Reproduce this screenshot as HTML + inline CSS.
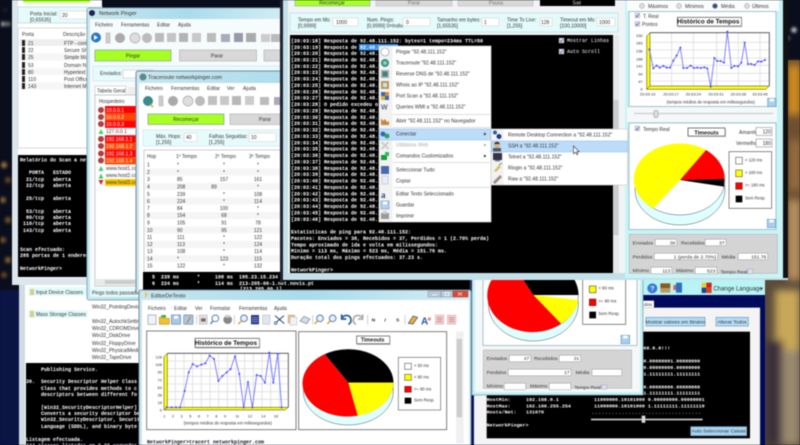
<!DOCTYPE html>
<html><head><meta charset="utf-8"><style>
html,body{margin:0;padding:0;width:800px;height:445px;overflow:hidden;background:#0a0d1c}
svg{display:block;filter:blur(.42px)}
.t{font-family:"Liberation Sans",sans-serif;font-size:5px;fill:#333}
.b{font-family:"Liberation Sans",sans-serif;font-size:6.3px;font-weight:bold;fill:#111}
.m{font-family:"Liberation Mono",monospace;font-size:5px;fill:#fff;font-weight:bold;white-space:pre}
.k{font-family:"Liberation Mono",monospace;font-size:5px;fill:#111;font-weight:bold;white-space:pre}
.e{text-anchor:end}.c{text-anchor:middle}
.z text{font-size:15px}
.z .b{font-size:19px}
</style></head><body>
<svg width="800" height="445" viewBox="0 0 800 445" xmlns="http://www.w3.org/2000/svg">
<defs>
<filter id="bl" x="-50%" y="-50%" width="200%" height="200%"><feGaussianBlur stdDeviation="1.6"/></filter>
<filter id="bl2" x="-50%" y="-50%" width="200%" height="200%"><feGaussianBlur stdDeviation="4"/></filter>
<marker id="p" markerUnits="userSpaceOnUse" markerWidth="8" markerHeight="8" refX="4" refY="4"><circle cx="4" cy="4" r="3" fill="#4a4aff"/></marker>
<linearGradient id="glass" x1="0" y1="0" x2="1" y2="0"><stop offset="0" stop-color="#c9e6ee"/><stop offset=".5" stop-color="#a9dcec"/><stop offset="1" stop-color="#d4eef4"/></linearGradient>
</defs>
<!-- background -->
<rect width="800" height="445" fill="#0a0d1c"/>
<rect x="0" y="290" width="25" height="155" fill="#0b1545"/>
<g filter="url(#bl)">
<circle cx="3" cy="24" r="2" fill="#ddd"/><circle cx="8" cy="24" r="2" fill="#999"/><circle cx="5" cy="10" r="1.5" fill="#334"/>
<circle cx="4" cy="165" r="3" fill="#a47a3a"/><circle cx="8" cy="180" r="3" fill="#6a4a24"/><circle cx="3" cy="200" r="3" fill="#8a6a3a"/><circle cx="8" cy="220" r="3" fill="#7a5a2a"/><circle cx="3" cy="240" r="3" fill="#7a5a2a"/><circle cx="8" cy="260" r="3" fill="#8a6a2a"/><circle cx="4" cy="275" r="3" fill="#6a4a24"/>
<circle cx="794" cy="30" r="2.5" fill="#eee"/><circle cx="788" cy="38" r="1.5" fill="#aab"/>
</g>
<rect x="765" y="280" width="35" height="165" fill="#5a4a3a"/>
<rect x="785" y="60" width="15" height="220" fill="#6e5030"/>
<g filter="url(#bl2)">
<rect x="788" y="65" width="12" height="50" fill="#d8901e"/><rect x="790" y="140" width="10" height="50" fill="#9a7040"/><rect x="788" y="200" width="12" height="80" fill="#b89464"/>
<rect x="775" y="290" width="25" height="60" fill="#c8a858"/><rect x="765" y="340" width="18" height="105" fill="#3a2e3a"/><rect x="782" y="350" width="18" height="95" fill="#9a8a70"/>
</g>

<!-- back-left window -->
<rect x="19" y="280" width="125" height="165" fill="#cfdce4"/>
<rect x="25" y="280" width="115" height="165" fill="#fff"/>
<rect x="28" y="287" width="60" height="9" fill="#e2fbfb"/>
<rect x="28" y="310" width="60" height="8" fill="#e2fbfb"/>
<rect x="30" y="289" width="4" height="6" fill="#d8cc8a"/><rect x="30" y="311" width="4" height="6" fill="#d8cc8a"/>
<text class="t" x="36" y="294">Input Device Classes</text>
<text class="t" x="36" y="316">Mass Storage Classes</text>
<text class="t" x="92" y="308.5">Win32_PointingDevice</text>
<text class="t" x="92" y="323">Win32_AutochkSetting</text>
<text class="t" x="92" y="330">Win32_CDROMDrive</text>
<text class="t" x="92" y="337">Win32_DiskDrive</text>
<text class="t" x="92" y="345">Win32_FloppyDrive</text>
<text class="t" x="92" y="352">Win32_PhysicalMedia</text>
<text class="t" x="92" y="359">Win32_TapeDrive</text>
<rect x="26" y="363" width="114" height="82" fill="#000"/>
<text class="m" x="41" y="371">Publishing Service.</text>
<text class="m" x="26" y="383">36.  Security Descriptor Helper Class</text>
<text class="m" x="41" y="390">Class that provides methods to c</text>
<text class="m" x="41" y="396">descriptors between different fo</text>
<text class="m" x="41" y="409">[Win32_SecurityDescriptorHelper]</text>
<text class="m" x="41" y="415">Converts a security descriptor be</text>
<text class="m" x="41" y="421">Win32_SecurityDescriptor, Securit</text>
<text class="m" x="41" y="428">Language (SDDL), and binary byte</text>
<text class="m" x="26" y="441">Listagem efectuada.</text>
<text class="m" x="26" y="447">444 classes listadas em 0.06 segundos</text>

<!-- bottom right window -->
<rect x="470" y="278" width="295" height="167" fill="#000a5c"/>
<rect x="643" y="280" width="122" height="15" fill="#b8f4f4"/>
<g class="z" transform="translate(470,270) scale(.33333)">
<circle cx="547" cy="55" r="15" fill="#3a78d8"/><text x="541" y="62" style="font-size:20px;font-weight:bold;font-family:'Liberation Sans'" fill="#fff">?</text>
<rect x="571" y="40" width="30" height="14" fill="#8a5a20"/><rect x="571" y="54" width="30" height="14" fill="#b89a60"/>
<rect x="610" y="45" width="10" height="15" fill="#d86060"/><rect x="618" y="38" width="18" height="30" fill="#2a70c0"/>
<rect x="695" y="38" width="14" height="15" fill="#e8d020"/><rect x="709" y="38" width="16" height="15" fill="#d02020"/><rect x="695" y="53" width="14" height="16" fill="#2040a0"/><rect x="709" y="53" width="16" height="16" fill="#e04020"/>
<text class="t" x="730" y="61" style="font-size:18px">Change Language</text>
<path d="M871 54h8l-4 5z" fill="#222"/>
<rect x="520" y="92" width="32" height="21" fill="#fff"/><text class="t" x="522" y="108">dos</text>
<rect x="12" y="113" width="858" height="412" fill="#f4f4f4" stroke="#bbb"/>
<rect x="528" y="142" width="177" height="26" fill="#b4dcf4" stroke="#6a9ac0" stroke-width="2"/><text class="t c" x="616" y="160">Mostrar valores em Binário</text>
<rect x="738" y="142" width="97" height="26" fill="#b4dcf4" stroke="#6a9ac0" stroke-width="2"/><text class="t c" x="786" y="160">Alterar Todos</text>
<rect x="50" y="185" width="790" height="320" fill="#000"/>
<text class="m" x="520" y="238" style="font-size:15px">68.0.0!!!</text>
<text class="m" x="520" y="277" style="font-size:15px">0.00000001.00000000</text>
<text class="m" x="520" y="297" style="font-size:15px">0.00000000.00000000</text>
<text class="m" x="520" y="316" style="font-size:15px">1.11111111.11111111</text>
<text class="m" x="520" y="355" style="font-size:15px">0.00000000.00000000</text>
<text class="m" x="520" y="374" style="font-size:15px">1.11111111.11111111</text>
<text class="m" x="50" y="393" style="font-size:15px">HostMin:</text><text class="m" x="168" y="393" style="font-size:15px">192.168.0.1</text><text class="m" x="372" y="393" style="font-size:15px">11000000.10101000 0.00000000.00000001</text>
<text class="m" x="50" y="412" style="font-size:15px">HostMax:</text><text class="m" x="168" y="412" style="font-size:15px">192.169.255.254</text><text class="m" x="372" y="412" style="font-size:15px">11000000.10101000 1.11111111.11111110</text>
<text class="m" x="50" y="431" style="font-size:15px">Hosts/Net:</text><text class="m" x="168" y="431" style="font-size:15px">131070</text>
<text class="m" x="50" y="470" style="font-size:15px">NetworkPinger&gt;</text>
<path d="M368 430h330" stroke="#aaa" stroke-width="3" stroke-dasharray="2 8"/>
<rect x="363" y="446" width="335" height="5" fill="#ccc"/><rect x="515" y="437" width="11" height="21" fill="#ddd" stroke="#888"/>
<rect x="662" y="470" width="168" height="27" fill="#a8d4f0" stroke="#6a9ac0" stroke-width="2"/><text class="t c" x="746" y="488">Auto Seleccionar Caixas</text>
</g>

<!-- port scan window -->
<rect x="12" y="0" width="90" height="285" fill="#dce6ec"/>
<rect x="18" y="0" width="84" height="278" fill="#fff"/>
<rect x="23" y="0" width="67" height="2.5" fill="#a6ff2a"/>
<rect x="18" y="7" width="84" height="16" fill="#e6fcfc" stroke="#cde"/>
<text class="t" x="30" y="15.5">Porta Inicial:</text><text class="t" x="30" y="21.5">[0,65535]</text>
<rect x="60" y="11" width="30" height="8" fill="#fff" stroke="#ccc" stroke-width=".5"/><text class="t" x="62" y="17">20</text>
<rect x="18" y="28" width="70" height="120" fill="#fff" stroke="#ccc" stroke-width=".7"/>
<text class="t" x="22" y="36">Porta</text><text class="t" x="63" y="36">Descrição</text>
<rect x="19" y="39" width="68" height="7" fill="#eee"/><rect x="19" y="53.5" width="68" height="7" fill="#f6f6f6"/><rect x="19" y="68" width="68" height="7" fill="#f6f6f6"/><rect x="19" y="82.5" width="68" height="7" fill="#f6f6f6"/>
<g fill="#222"><rect x="22" y="40" width="3" height="6"/><rect x="22" y="47" width="3" height="6"/><rect x="22" y="54" width="3" height="6"/><rect x="22" y="62" width="3" height="6"/><rect x="22" y="69" width="3" height="6"/><rect x="22" y="76" width="3" height="6"/><rect x="22" y="83" width="3" height="6"/></g>
<text class="t" x="28" y="45">21</text><text class="t" x="64" y="45">FTP - controlo</text>
<text class="t" x="28" y="52">22</text><text class="t" x="64" y="52">Secure Shell</text>
<text class="t" x="28" y="59">25</text><text class="t" x="64" y="59">Simple Mail</text>
<text class="t" x="28" y="67">53</text><text class="t" x="64" y="67">Domain Name</text>
<text class="t" x="28" y="74">80</text><text class="t" x="64" y="74">Hypertext T</text>
<text class="t" x="28" y="81">110</text><text class="t" x="64" y="81">Post Office</text>
<text class="t" x="28" y="88">143</text><text class="t" x="64" y="88">Internet Me</text>
<rect x="18" y="155" width="84" height="122" fill="#000"/>
<text class="m" x="20" y="161.5">Relatório do Scan a net</text>
<text class="m" x="20" y="174">   PORTA   ESTADO</text>
<text class="m" x="20" y="181">  21/tcp   aberta</text>
<text class="m" x="20" y="187">  22/tcp   aberta</text>
<text class="m" x="20" y="200">  25/tcp   aberta</text>
<text class="m" x="20" y="213">  53/tcp   aberta</text>
<text class="m" x="20" y="219">  80/tcp   aberta</text>
<text class="m" x="20" y="225"> 110/tcp   aberta</text>
<text class="m" x="20" y="232"> 143/tcp   aberta</text>
<text class="m" x="20" y="251">Scan efectuado:</text>
<text class="m" x="20" y="257">285 portas de 1 endereço</text>
<text class="m" x="20" y="270">NetworkPinger&gt;</text>

<!-- Network Pinger window -->
<rect x="87" y="8" width="200" height="292" rx="2" fill="url(#glass)" stroke="#8ab"/>
<rect x="90" y="19" width="197" height="278" fill="#f6fbfc"/>
<circle cx="92" cy="13" r="3" fill="#225"/>
<text class="t" x="99" y="15" style="font-size:5.5px" fill="#222">Network Pinger</text>
<text class="t" x="95" y="26.7">Ficheiro</text><text class="t" x="121" y="26.7">Ferramentas</text><text class="t" x="157" y="26.7">Editar</text><text class="t" x="178" y="26.7">Ajuda</text>
<circle cx="96" cy="37.5" r="5" fill="#2a78c0"/><path d="M94 35l4 2.5-4 2.5z" fill="#fff"/>
<rect x="106" y="33" width="4" height="10" fill="#ccc" stroke="#aaa" stroke-width=".5"/>
<circle cx="120" cy="38" r="5" fill="#aaa"/>
<circle cx="135" cy="38" r="5" fill="#ddd" stroke="#aaa" stroke-width=".7"/>
<circle cx="147" cy="38" r="5" fill="#bbb"/>
<rect x="155" y="33" width="9" height="9" fill="#bbb"/><rect x="167" y="33" width="9" height="9" fill="#c4c4c4"/><rect x="179" y="33" width="9" height="9" fill="#b4b4b4"/><rect x="192" y="33" width="9" height="9" fill="#c8c8c8"/><rect x="207" y="33" width="9" height="9" fill="#bbb"/>
<rect x="221" y="34" width="9" height="8" fill="#aab"/><rect x="234" y="33" width="9" height="9" fill="#99a"/><rect x="246" y="33" width="10" height="9" fill="#aaa"/><rect x="261" y="34" width="9" height="8" fill="#ccc"/><rect x="271" y="34" width="9" height="8" fill="#bbb"/>
<rect x="95" y="50" width="76" height="11" fill="#a8ff22" stroke="#8aa" stroke-width=".8"/><text class="t c" x="133" y="57.5">Pingar</text>
<rect x="179.500" y="50" width="77" height="11" fill="#d8d8d8" stroke="#bbb" stroke-width=".8"/><text class="t c" x="217" y="57.5" fill="#888">Parar</text>
<rect x="264" y="50" width="20" height="11" fill="#d8d8d8" stroke="#bbb" stroke-width=".8"/>
<rect x="93" y="66" width="190" height="15" fill="#e6fcfc" stroke="#cde" stroke-width=".6"/>
<text class="t" x="100" y="75">Enviados:</text>
<rect x="123" y="70" width="30" height="8" fill="#fff" stroke="#bbb" stroke-width=".5"/>
<rect x="95" y="86" width="31" height="9" fill="#fff" stroke="#bbb" stroke-width=".5"/><text class="t" x="97" y="92.500">Tabela Geral</text>
<rect x="128" y="87" width="10" height="8" fill="#eee"/>
<rect x="95" y="95" width="45" height="191" fill="#fff" stroke="#aaa" stroke-width=".6"/>
<text class="t" x="99" y="103">Hospedeiro</text>
<rect x="105" y="106" width="35" height="7.300" fill="#ff0000"/><rect x="105" y="113.300" width="35" height="7.300" fill="#ff4500"/><rect x="105" y="120.600" width="35" height="7.300" fill="#ff0000"/>
<rect x="105" y="135.200" width="35" height="7.300" fill="#ff0000"/><rect x="105" y="142.500" width="35" height="7.300" fill="#ff4500"/><rect x="105" y="149.800" width="35" height="7.300" fill="#ff0000"/><rect x="105" y="157.100" width="35" height="7.300" fill="#ff4500"/><rect x="105" y="179" width="35" height="7" fill="#ffc800"/>
<g fill="#b04040"><circle cx="101" cy="110" r="3"/><circle cx="101" cy="117" r="3"/><circle cx="101" cy="124" r="3"/><circle cx="101" cy="139" r="3"/><circle cx="101" cy="146" r="3"/><circle cx="101" cy="153.500" r="3"/><circle cx="101" cy="160.500" r="3"/></g>
<path d="M98.500 134l2.500-5 2.500 5zM98.500 171l2.500-5 2.500 5zM98.500 178.500l2.500-5 2.500 5z" fill="#44cc66"/><path d="M98.500 180l2.500 5 2.500-5z" fill="#e02020"/>
<g fill="#fff"><text class="t" x="106" y="112" style="fill:#fff">10.0.0.1</text><text class="t" x="106" y="119" style="fill:#fff">10.0.0.2</text><text class="t" x="106" y="126" style="fill:#fff">10.0.0.3</text><text class="t" x="106" y="141" style="fill:#fff">192.168.1.1</text><text class="t" x="106" y="148" style="fill:#fff">192.168.1.2</text><text class="t" x="106" y="155.500" style="fill:#fff">192.168.1.3</text><text class="t" x="106" y="162.500" style="fill:#fff">192.168.1.4</text></g>
<text class="t" x="106" y="133">127.0.0.1</text>
<text class="t" x="106" y="170">www.host1.com</text><text class="t" x="106" y="177">www.host2.com</text><text class="t" x="106" y="184">www.host3.com</text>
<rect x="96" y="279" width="44" height="6" fill="#e8e8e8"/><rect x="105" y="280" width="30" height="4" fill="#ccc"/>
<rect x="90" y="288" width="50" height="9" fill="#e2fbfb"/><text class="t" x="92" y="294.500">Pings todos passados</text>

<!-- Traceroute window -->
<rect x="136" y="71" width="334" height="222" rx="2" fill="url(#glass)" stroke="#789"/>
<rect x="139" y="83" width="330" height="208" fill="#fff"/>
<circle cx="143" cy="77" r="3.500" fill="#5a8a90"/>
<text class="t" x="148" y="78.800" style="font-size:5.5px">Traceroute networkpinger.com</text>
<text class="t" x="145" y="90.200">Ficheiro</text><text class="t" x="171" y="90.200">Ferramentas</text><text class="t" x="207" y="90.200">Editar</text><text class="t" x="227" y="90.200">Ver</text><text class="t" x="243" y="90.200">Ajuda</text>
<circle cx="148" cy="101" r="5" fill="#3a8a90"/><path d="M150 104l3 3" stroke="#d8a020" stroke-width="1.500"/>
<rect x="159" y="96" width="4" height="10" fill="#ccc" stroke="#aaa" stroke-width=".5"/>
<circle cx="173" cy="101" r="5" fill="#aaa"/><circle cx="188" cy="101" r="5" fill="#ddd" stroke="#aaa" stroke-width=".7"/><circle cx="200" cy="101" r="5" fill="#bbb"/>
<rect x="208" y="96" width="9" height="9" fill="#c0c0c0"/><rect x="220" y="96" width="9" height="9" fill="#c8c8c8"/><rect x="232" y="96" width="9" height="9" fill="#b8b8b8"/><rect x="245" y="96" width="9" height="9" fill="#ccc"/><rect x="260" y="97" width="9" height="8" fill="#bbb"/><rect x="274" y="97" width="9" height="8" fill="#aab"/>
<rect x="148" y="114" width="76" height="10.500" fill="#a8ff22" stroke="#8aa" stroke-width=".8"/><text class="t c" x="186" y="121">Recomeçar</text>
<rect x="230" y="114" width="77" height="10.500" fill="#d8d8d8" stroke="#bbb" stroke-width=".8"/><text class="t c" x="265" y="121" fill="#888">Parar</text>
<rect x="143" y="130" width="160" height="16" fill="#e6fcfc" stroke="#cde" stroke-width=".6"/>
<text class="t" x="156" y="138">Máx. Hops:</text><text class="t" x="156" y="144">[1,255]</text>
<rect x="184" y="133" width="13" height="8.500" fill="#fff" stroke="#ccc" stroke-width=".5"/><text class="t" x="186" y="139">40</text>
<text class="t" x="209" y="138">Falhas Seguidas:</text><text class="t" x="209" y="144">[1,255]</text>
<rect x="249" y="133" width="27" height="8.500" fill="#fff" stroke="#ccc" stroke-width=".5"/><text class="t" x="251" y="139">10</text>
<rect x="144" y="150" width="326" height="122" fill="#fff" stroke="#aaa" stroke-width=".6"/>
<text class="t" x="147" y="158">Hop</text><text class="t" x="176" y="158">1º Tempo</text><text class="t" x="215" y="158">2º Tempo</text><text class="t" x="249" y="158">3º Tempo</text>
<g fill="#f5f5f5"><rect x="145" y="168.500" width="150" height="7"/><rect x="145" y="183" width="150" height="7"/><rect x="145" y="197.500" width="150" height="7"/><rect x="145" y="212" width="150" height="7"/><rect x="145" y="226.500" width="150" height="7"/><rect x="145" y="241" width="150" height="7"/><rect x="145" y="255" width="150" height="7"/></g>
<g class="t">
<text class="t" x="147" y="166.500">1</text><text class="t" x="177" y="166.500">*</text><text class="t c" x="224" y="166.500">*</text><text class="t c" x="258" y="166.500">*</text>
<text class="t" x="147" y="174">2</text><text class="t" x="177" y="174">*</text><text class="t c" x="224" y="174">*</text><text class="t c" x="258" y="174">*</text>
<text class="t" x="147" y="181">3</text><text class="t" x="177" y="181">85</text><text class="t c" x="224" y="181">157</text><text class="t c" x="258" y="181">161</text>
<text class="t" x="147" y="188.500">4</text><text class="t" x="177" y="188.500">208</text><text class="t c" x="214" y="188.500">89</text><text class="t c" x="258" y="188.500">*</text>
<text class="t" x="147" y="195.800">5</text><text class="t" x="177" y="195.800">239</text><text class="t c" x="224" y="195.800">*</text><text class="t c" x="258" y="195.800">108</text>
<text class="t" x="147" y="203">6</text><text class="t" x="177" y="203">224</text><text class="t c" x="224" y="203">*</text><text class="t c" x="258" y="203">114</text>
<text class="t" x="147" y="210">7</text><text class="t" x="177" y="210">84</text><text class="t c" x="224" y="210">100</text><text class="t c" x="258" y="210">*</text>
<text class="t" x="147" y="217">8</text><text class="t" x="177" y="217">154</text><text class="t c" x="224" y="217">68</text><text class="t c" x="258" y="217">*</text>
<text class="t" x="147" y="224.500">9</text><text class="t" x="177" y="224.500">105</text><text class="t c" x="224" y="224.500">91</text><text class="t c" x="258" y="224.500">78</text>
<text class="t" x="147" y="231.800">10</text><text class="t" x="177" y="231.800">90</text><text class="t c" x="224" y="231.800">95</text><text class="t c" x="258" y="231.800">121</text>
<text class="t" x="147" y="239">11</text><text class="t" x="177" y="239">111</text><text class="t c" x="224" y="239">*</text><text class="t c" x="258" y="239">122</text>
<text class="t" x="147" y="246">12</text><text class="t" x="177" y="246">113</text><text class="t c" x="224" y="246">*</text><text class="t c" x="258" y="246">124</text>
<text class="t" x="147" y="253">13</text><text class="t" x="177" y="253">108</text><text class="t c" x="224" y="253">*</text><text class="t c" x="258" y="253">114</text>
<text class="t" x="147" y="260.500">14</text><text class="t" x="177" y="260.500">*</text><text class="t c" x="224" y="260.500">123</text><text class="t c" x="258" y="260.500">115</text>
<text class="t" x="147" y="267.500">15</text><text class="t" x="177" y="267.500">122</text><text class="t c" x="224" y="267.500">*</text><text class="t c" x="258" y="267.500">132</text>
</g>
<rect x="143" y="272" width="327" height="19" fill="#000"/>
<text class="m" x="149" y="278.500"> 5  239 ms      *     108 ms  195.23.15.234</text>
<text class="m" x="149" y="285"> 6  224 ms      *     114 ms  213-205-00-1.net.novis.pt</text>
<text class="m" x="240" y="290.500">[213.205.00.1]</text>

<!-- Pie window 2 -->
<rect x="472" y="270" width="171" height="125" fill="#c8f0f4" stroke="#7ab" stroke-width=".8"/>
<rect x="475" y="270" width="165" height="122" fill="#f4f8f8"/>
<rect x="483" y="270" width="154" height="75.500" fill="#fff" stroke="#8ab" stroke-width=".7"/>
<g class="z" transform="translate(470,270) scale(.33333)">
<ellipse cx="190" cy="103" rx="135" ry="110" fill="#e0ffff" stroke="#456" stroke-width="1.500"/>
<ellipse cx="190" cy="75" rx="135" ry="110" fill="#fff" stroke="#456" stroke-width="1.500"/>
<path d="M190 75L125.600 -21.700A135 110 0 0 1 325 75Z" fill="#000"/>
<path d="M190 75L325 90A135 110 0 0 1 273 161Z" fill="#ff0"/>
<path d="M190 75L273 161A135 110 0 1 1 125.600 -21.700Z" fill="#f00"/>
<rect x="338" y="10" width="129" height="153" fill="#fff" stroke="#555" stroke-width="2"/>
<rect x="358" y="48" width="20" height="20" fill="#ff0" stroke="#222" stroke-width="1.500"/><rect x="358" y="87" width="20" height="20" fill="#f00" stroke="#222" stroke-width="1.500"/><rect x="358" y="125" width="20" height="20" fill="#000"/>
<text class="t" x="385" y="58" style="font-size:13px">&lt; 90 ms</text><text class="t" x="385" y="97" style="font-size:13px">&gt;= 90 ms</text><text class="t" x="385" y="135" style="font-size:13px">Sem Resp.</text>
<rect x="453" y="196" width="26" height="25" fill="#a8d0ec" stroke="#6a9ac0" stroke-width="2"/><rect x="459" y="197" width="14" height="8" fill="#fff"/>
<rect x="40" y="240" width="445" height="115" fill="#d4d4d4" stroke="#aaa" stroke-width="1.500"/>
<text class="t" x="50" y="270">Enviados</text><rect x="118" y="256" width="64" height="19" fill="#fff" stroke="#777"/><text class="t e" x="178" y="270">47</text>
<text class="t" x="192" y="270">Recebidos</text><rect x="268" y="256" width="64" height="19" fill="#fff" stroke="#777"/><text class="t e" x="328" y="270">31</text>
<text class="t" x="50" y="312">Perdidos</text><rect x="115" y="298" width="188" height="19" fill="#fff" stroke="#777"/><text class="t e" x="299" y="312">17</text>
<text class="t" x="317" y="312">Média</text><rect x="366" y="298" width="89" height="19" fill="#fff" stroke="#777"/>
<text class="t" x="50" y="353">Mínimo</text><rect x="103" y="340" width="64" height="19" fill="#fff" stroke="#777"/>
<text class="t" x="180" y="353">Máximo</text><rect x="238" y="340" width="64" height="19" fill="#fff" stroke="#777"/>
<text class="t" x="313" y="357">Tempo Real</text><rect x="395" y="344" width="15" height="14" fill="#dde" stroke="#889"/>
</g>

<!-- Editor window -->
<rect x="139" y="290" width="332" height="170" rx="2" fill="url(#glass)" stroke="#789"/>
<path d="M145 292l3 2-3 4z" fill="#e8c060"/>
<text class="t" x="151" y="297.500" style="font-size:5.5px">EditorDeTexto</text>
<rect x="428" y="291" width="13" height="6" fill="#b8c8d4" stroke="#789" stroke-width=".4"/><rect x="441" y="291" width="12" height="6" fill="#b8c8d4" stroke="#789" stroke-width=".4"/><rect x="453" y="291" width="15" height="6" fill="#d84a3a" stroke="#822" stroke-width=".4"/>
<path d="M432 295h5M445 292.500h4v3h-4zM458 292.500l4 3M462 292.500l-4 3" stroke="#fff" stroke-width=".7" fill="none"/>
<rect x="142" y="300" width="327" height="145" fill="#fff"/>
<text class="t" x="148" y="310">Ficheiro</text><text class="t" x="174" y="310">Editar</text><text class="t" x="195" y="310">Ver</text><text class="t" x="210" y="310">Formatar</text><text class="t" x="239" y="310">Ferramentas</text><text class="t" x="274" y="310">Ajuda</text>
<g class="z" transform="translate(140,295) scale(.33333)">
<rect x="24" y="60" width="24" height="28" fill="#f0f4f8" stroke="#89a" stroke-width="2"/>
<path d="M58 66h12l4 4h14v18H58z" fill="#f0c030" stroke="#a80" stroke-width="1.500"/><rect x="64" y="60" width="14" height="8" fill="#4a4"/>
<rect x="94" y="60" width="28" height="28" rx="2" fill="#a8c8e8" stroke="#68a" stroke-width="2"/><rect x="102" y="62" width="12" height="9" fill="#fff"/>
<rect x="131" y="60" width="28" height="28" rx="2" fill="#a8c8e8" stroke="#68a" stroke-width="2"/><path d="M140 85l12-20" stroke="#d88020" stroke-width="4"/>
<path d="M170 60v28" stroke="#bbb" stroke-width="2"/>
<rect x="178" y="60" width="24" height="28" fill="#dde" stroke="#89a"/><rect x="183" y="70" width="14" height="10" fill="#8a6a4a"/>
<circle cx="226" cy="70" r="10" fill="none" stroke="#5a80b0" stroke-width="3"/><path d="M219 78l-8 9" stroke="#5a80b0" stroke-width="4"/>
<circle cx="263" cy="74" r="13" fill="#888"/><rect x="255" y="60" width="16" height="8" fill="#ccc"/>
<path d="M283 60v28" stroke="#bbb" stroke-width="2"/>
<circle cx="312" cy="70" r="10" fill="#e8f0f8" stroke="#5a80b0" stroke-width="3"/><path d="M304 78l-9 9" stroke="#d8a020" stroke-width="4"/>
<rect x="333" y="60" width="24" height="28" fill="#2a3a8a"/><path d="M336 68h18M336 74h18M336 80h18" stroke="#a8b8e8" stroke-width="2"/>
<rect x="368" y="60" width="22" height="28" fill="#dfe6ee" stroke="#99a"/>
<path d="M405 62l28 24M432 62l-28 24" stroke="#247" stroke-width="3"/><circle cx="407" cy="84" r="4" fill="#e8f0f8" stroke="#247" stroke-width="2"/>
<rect x="444" y="60" width="20" height="24" fill="#e8c090" stroke="#a86"/><rect x="450" y="66" width="20" height="24" fill="#f0f4f8" stroke="#89a"/>
<path d="M480 78l12-14 18 8-10 14z" fill="#d8dce4" stroke="#68a" stroke-width="2"/>
<path d="M518 60v28" stroke="#bbb" stroke-width="2"/>
<circle cx="540" cy="70" r="10" fill="#e8f0f8" stroke="#5a80b0" stroke-width="3"/><path d="M532 78l-8 9" stroke="#d8a020" stroke-width="4"/>
<circle cx="578" cy="70" r="10" fill="#e8f0f8" stroke="#5a80b0" stroke-width="3"/><path d="M570 78l-8 9" stroke="#d8a020" stroke-width="4"/>
<path d="M605 70c10-14 28-10 28 6 0 6-4 10-8 12M605 58v14h14" fill="none" stroke="#24589a" stroke-width="5"/>
<path d="M668 70c-10-14-28-10-28 6 0 6 4 10 8 12M668 58v14h-14" fill="none" stroke="#aaa" stroke-width="5"/>
<path d="M683 60v28" stroke="#bbb" stroke-width="2"/>
<text x="695" y="80" style="font:bold 15px 'Liberation Sans'" fill="#333">N</text><text x="733" y="80" style="font:italic bold 15px 'Liberation Sans'" fill="#333">I</text><text x="768" y="80" style="font:bold 15px 'Liberation Sans'" fill="#333">S</text>
<path d="M795 60v28" stroke="#bbb" stroke-width="2"/>
<path d="M805 85l14-22 14 4-14 20z" fill="#f0b030" stroke="#248" stroke-width="2"/>
<text x="843" y="88" style="font:bold 30px 'Liberation Sans'" fill="#2458a0">A</text><circle cx="868" cy="72" r="5" fill="#e88"/>
<rect x="886" y="60" width="26" height="28" fill="#f0d0d0" stroke="#aaa"/><path d="M891 68h16M891 74h16M891 80h16" stroke="#c66" stroke-width="2"/>
<rect x="922" y="60" width="26" height="28" fill="#f0d0d0" stroke="#aaa"/><path d="M927 68h16M927 74h16M927 80h16" stroke="#c66" stroke-width="2"/>
<rect x="20" y="108" width="448" height="296" fill="#fff" stroke="#666" stroke-width="2.500"/>
<rect x="476" y="110" width="444" height="294" fill="#fff" stroke="#666" stroke-width="2.500"/>
<rect x="960" y="110" width="10" height="335" fill="#ddd"/><rect x="948" y="110" width="22" height="335" fill="#f0f0f0"/><rect x="950" y="132" width="16" height="235" fill="#ccc"/>
<path d="M80 175v163M80 198h365M80 221h365M80 244h365M80 267h365M80 290h365M80 313h365M106 175v163M132 175v163M158 175v163M184 175v163M210 175v163M236 175v163M262 175v163M288 175v163M314 175v163M340 175v163M366 175v163M392 175v163M418 175v163" stroke="#ddd" stroke-width="2.500" fill="none"/>
<path d="M72 185L82 175V337L72 345Z" fill="#ff0" stroke="#333" stroke-width="1.500"/>
<path d="M72 345L82 337H445L435 345Z" fill="#ff0" stroke="#333" stroke-width="1.500"/>
<path d="M82 175H445V337" fill="none" stroke="#444" stroke-width="2.500"/>
<polyline marker-start="url(#p)" marker-mid="url(#p)" marker-end="url(#p)" points="80,337 95,337 108,337 120,337 134,288 146,232 158,207 171,214 184,209 196,205 209,182 222,192 235,258 247,243 260,232 272,222 285,184 298,237 311,337 324,261 337,337 350,240 362,243 375,263 388,173 400,263 413,177 425,337" fill="none" stroke="#6a6aff" stroke-width="2.500"/>
<g style="font-size:12px"><text class="t e" x="66" y="190" style="font-size:12px">126</text><text class="t e" x="66" y="213" style="font-size:12px">108</text><text class="t e" x="66" y="236" style="font-size:12px">90</text><text class="t e" x="66" y="259" style="font-size:12px">72</text><text class="t e" x="66" y="282" style="font-size:12px">54</text><text class="t e" x="66" y="305" style="font-size:12px">36</text><text class="t e" x="66" y="327" style="font-size:12px">18</text><text class="t e" x="66" y="350" style="font-size:12px">0</text>
<text class="t c" x="73" y="367" style="font-size:12px">1</text><text class="t c" x="99" y="367" style="font-size:12px">2</text><text class="t c" x="125" y="367" style="font-size:12px">3</text><text class="t c" x="151" y="367" style="font-size:12px">5</text><text class="t c" x="177" y="367" style="font-size:12px">6</text><text class="t c" x="203" y="367" style="font-size:12px">7</text><text class="t c" x="229" y="367" style="font-size:12px">8</text><text class="t c" x="255" y="367" style="font-size:12px">9</text><text class="t c" x="292" y="367" style="font-size:12px">11</text><text class="t c" x="330" y="367" style="font-size:12px">12</text><text class="t c" x="370" y="367" style="font-size:12px">14</text><text class="t c" x="408" y="367" style="font-size:12px">16</text></g>
<text class="t" x="131" y="389" style="font-size:12.500px">(tempos médios de resposta em milissegundos)</text>
<rect x="165" y="130" width="193" height="27" fill="#fff" stroke="#444" stroke-width="2"/><path d="M359 132v27h-193" stroke="#aaa" stroke-width="3" fill="none"/><text class="b c" x="258" y="150">Histórico de Tempos</text>
<rect x="650" y="123" width="99" height="23" fill="#fff" stroke="#444" stroke-width="2"/><path d="M750 125v23h-99" stroke="#aaa" stroke-width="3" fill="none"/><text class="b c" x="698" y="140" style="font-size:16px">Timeouts</text>
<ellipse cx="625" cy="290" rx="135" ry="100" fill="#e0ffff" stroke="#456" stroke-width="1.500"/>
<ellipse cx="625" cy="263" rx="135" ry="100" fill="#fff" stroke="#456" stroke-width="1.500"/>
<path d="M625 263L555 178A135 100 0 0 1 760 263Z" fill="#000"/>
<path d="M625 263H760A135 100 0 0 1 653 362Z" fill="#ff0"/>
<path d="M625 263L653 362A135 100 0 0 1 555 178Z" fill="#f00"/>
<rect x="775" y="187" width="127" height="158" fill="#fff" stroke="#666" stroke-width="2"/>
<rect x="794" y="205" width="20" height="18" fill="#fff" stroke="#333" stroke-width="1.500"/><rect x="794" y="238" width="20" height="18" fill="#ff0" stroke="#333" stroke-width="1.500"/><rect x="794" y="274" width="20" height="18" fill="#f00" stroke="#333" stroke-width="1.500"/><rect x="794" y="308" width="20" height="18" fill="#000"/>
<text class="t" x="822" y="216" style="font-size:12.500px">&lt; 50 ms</text><text class="t" x="822" y="250" style="font-size:12.500px">&lt; 90 ms</text><text class="t" x="822" y="286" style="font-size:12.500px">&gt;= 90 ms</text><text class="t" x="822" y="320" style="font-size:12.500px">Sem Resp.</text>
</g>
<text class="k" x="147" y="443.500">NetworkPinger&gt;tracert networkpinger.com</text>

<!-- Main window -->
<rect x="280" y="0" width="3" height="283" fill="#223"/>
<rect x="283" y="0" width="505" height="280" fill="#c4e0e8"/>
<rect x="288" y="0" width="495" height="273" fill="#f0f4f6"/>
<rect x="783" y="0" width="5" height="278" fill="#111"/>
<rect x="295" y="0" width="75" height="6" fill="#a8ff22" stroke="#8aa" stroke-width=".6"/><text class="t c" x="332" y="4.500">Recomeçar</text>
<rect x="376" y="0" width="76" height="6" fill="#d8d8d8" stroke="#bbb" stroke-width=".6"/><text class="t c" x="414" y="4.500" style="fill:#777">Parar</text>
<rect x="458" y="0" width="75" height="6" fill="#d8d8d8" stroke="#bbb" stroke-width=".6"/><text class="t c" x="496" y="4.500" style="fill:#777">Pausa</text>
<rect x="540" y="0" width="75" height="6" fill="#000"/><text class="t c" x="577" y="4.500" style="fill:#ddd">Sair</text>
<rect x="290" y="13" width="328" height="19" fill="#e4fbfb" stroke="#c4dde4" stroke-width=".8"/>
<text class="t" x="298" y="21.500">Tempo em Ms:</text><text class="t" x="298" y="27.500">[0,9999]</text><rect x="333" y="18" width="25" height="8" fill="#fff" stroke="#ccc" stroke-width=".5"/><text class="t" x="336" y="24">1000</text>
<text class="t" x="367" y="21.500">Num. Pings:</text><text class="t" x="367" y="27.500">[0,9999] 0=Indiv.</text><rect x="403" y="18" width="27" height="8" fill="#fff" stroke="#ccc" stroke-width=".5"/><text class="t" x="406" y="24">0</text>
<text class="t" x="437" y="21.500">Tamanho em bytes:</text><text class="t" x="437" y="27.500">[1,65535]</text><rect x="482" y="18" width="17" height="8" fill="#fff" stroke="#ccc" stroke-width=".5"/><text class="t" x="484" y="24">1</text>
<text class="t" x="507" y="21.500">Time To Live:</text><text class="t" x="507" y="27.500">[1,255]</text><rect x="540" y="18" width="12" height="8" fill="#fff" stroke="#ccc" stroke-width=".5"/><text class="t" x="541" y="24">128</text>
<text class="t" x="560" y="21.500">Timeout em Ms:</text><text class="t" x="560" y="27.500">[100,10000]</text><rect x="597" y="18" width="18" height="8" fill="#fff" stroke="#ccc" stroke-width=".5"/><text class="t" x="599" y="24">1000</text>
<rect x="290" y="35" width="323" height="238" fill="#000"/>
<rect x="613" y="35" width="6" height="238" fill="#e8e8e8"/><rect x="613.500" y="100" width="5" height="135" fill="#ccc"/>
<text class="m" x="291" y="42.400">[20:03:18] Resposta de 92.48.111.152: bytes=1 tempo=234ms TTL=50</text>
<rect x="359" y="44" width="39" height="6.500" fill="#3390f0"/>
<text class="m" x="291" y="48.800">[20:03:19] Resposta de 92.48.111.152</text>
<text class="m" x="291" y="55.100">[20:03:20] Resposta de 92.48.1</text>
<text class="m" x="291" y="61.500">[20:03:21] Resposta de 92.48.1</text>
<text class="m" x="291" y="67.900">[20:03:22] Resposta de 92.48.1</text>
<text class="m" x="291" y="74.200">[20:03:23] Resposta de 92.48.1</text>
<text class="m" x="291" y="80.600">[20:03:24] Resposta de 92.48.1</text>
<text class="m" x="291" y="87">[20:03:25] Resposta de 92.48.1</text>
<text class="m" x="291" y="93.400">[20:03:26] Resposta de 92.48.1</text>
<text class="m" x="291" y="99.700">[20:03:27] Resposta de 92.48.1</text>
<text class="m" x="291" y="106.100">[20:03:28] O pedido excedeu o</text>
<text class="m" x="291" y="112.500">[20:03:29] Resposta de 92.48.1</text>
<text class="m" x="291" y="118.900">[20:03:30] Resposta de 92.48.1</text>
<text class="m" x="291" y="125.200">[20:03:31] Resposta de 92.48.1</text>
<text class="m" x="291" y="131.600">[20:03:32] Resposta de 92.48.1</text>
<text class="m" x="291" y="137.900">[20:03:33] Resposta de 92.48.1</text>
<text class="m" x="291" y="144.300">[20:03:34] Resposta de 92.48.1</text>
<text class="m" x="291" y="150.700">[20:03:35] Resposta de 92.48.1</text>
<text class="m" x="291" y="157.100">[20:03:36] Resposta de 92.48.1</text>
<text class="m" x="291" y="163.400">[20:03:37] Resposta de 92.48.1</text>
<text class="m" x="291" y="169.800">[20:03:38] Resposta de 92.48.1</text>
<text class="m" x="291" y="176.200">[20:03:39] Resposta de 92.48.1</text>
<text class="m" x="291" y="182.500">[20:03:40] Resposta de 92.48.1</text>
<text class="m" x="291" y="188.900">[20:03:41] Resposta de 92.48.1</text>
<text class="m" x="291" y="195.300">[20:03:42] Resposta de 92.48.1</text>
<text class="m" x="291" y="201.700">[20:03:43] Resposta de 92.48.1</text>
<text class="m" x="291" y="208">[20:03:44] Resposta de 92.48.1</text>
<text class="m" x="291" y="214.400">[20:03:45] Resposta de 92.48.1</text>
<text class="m" x="291" y="220.800">[20:03:46] Resposta de 92.48.1</text>
<text class="m" x="291" y="233.500">Estatísticas de ping para 92.48.111.152:</text>
<text class="m" x="291" y="239.900">Pacotes: Enviados = 38, Recebidos = 37, Perdidos = 1 (2.70% perda)</text>
<text class="m" x="291" y="246.300">Tempo aproximado de ida e volta em milissegundos:</text>
<text class="m" x="291" y="252.600">Mínimo = 113 ms, Máximo = 523 ms, Média = 151.76 ms.</text>
<text class="m" x="291" y="259">Duração total dos pings efectuados: 37.23 s.</text>
<text class="m" x="291" y="271.700">NetworkPinger&gt;</text>
<rect x="559" y="38" width="5" height="5" fill="#dde" stroke="#99a" stroke-width=".4"/><path d="M560 40.500l1 1.500 2-3" stroke="#247" stroke-width=".6" fill="none"/>
<rect x="559" y="49" width="5" height="5" fill="#dde" stroke="#99a" stroke-width=".4"/><path d="M560 51.500l1 1.500 2-3" stroke="#247" stroke-width=".6" fill="none"/>
<text class="m" x="567" y="42" style="font-weight:normal">Mostrar Linhas</text><text class="m" x="567" y="53" style="font-weight:normal">Auto Scroll</text>

<!-- history panel -->
<rect x="625" y="0" width="158" height="278" fill="#c8f4f6"/>
<rect x="627" y="0" width="152" height="11" fill="#fbfcfc"/>
<g fill="#ddd" stroke="#999" stroke-width=".5"><circle cx="642" cy="6" r="2.500"/><circle cx="679" cy="6" r="2.500"/><circle cx="747" cy="6" r="2.500"/></g><circle cx="715" cy="6" r="2.500" fill="#357" stroke="#999" stroke-width=".5"/>
<text class="t" x="648" y="8">Máximos</text><text class="t" x="685" y="8">Mínimos</text><text class="t" x="721" y="8">Média</text><text class="t" x="752" y="8">Últimos</text>
<rect x="629" y="11.500" width="147" height="95" fill="#fff" stroke="#8ab" stroke-width=".7"/>
<rect x="635" y="13" width="4.800" height="4.800" fill="#dde" stroke="#99a" stroke-width=".4"/><path d="M636 15.500l1 1.500 2-3" stroke="#247" stroke-width=".6" fill="none"/><text class="t" x="643" y="18">T. Real</text>
<rect x="635" y="21.500" width="4.800" height="4.800" fill="#dde" stroke="#99a" stroke-width=".4"/><path d="M636 24l1 1.500 2-3" stroke="#247" stroke-width=".6" fill="none"/><text class="t" x="642" y="26">Pontos</text>
<g class="z" transform="translate(620,0) scale(.33333)">
<path d="M90 127H448M90 150H448M90 174H448M90 196H448M90 220H448M90 243H448M155 98v160M220 98v160M290 98v160M355 98v160M420 98v160" stroke="#ddd" stroke-width="2.500" fill="none"/>
<path d="M80 108L90 98V258L80 268Z" fill="#ff0" stroke="#333" stroke-width="1.500"/>
<path d="M80 268L90 258H448L438 268Z" fill="#ff0" stroke="#333" stroke-width="1.500"/>
<path d="M90 98H448V258" fill="none" stroke="#444" stroke-width="2.500"/>
<polyline marker-start="url(#p)" marker-mid="url(#p)" marker-end="url(#p)" points="88,148 100,205 110,197 119,203 130,198 140,203 150,203 160,182 170,167 181,143 190,204 201,204 212,197 222,204 232,203 243,204 253,202 262,205 272,260 283,174 292,183 302,183 312,188 322,95 334,204 343,198 354,199 364,188 374,128 384,192 394,192 404,195 414,184 424,185 435,180" fill="none" stroke="#6a6aff" stroke-width="2.500"/>
<text class="t e" x="68" y="111" style="font-size:12px">330</text><text class="t e" x="68" y="134" style="font-size:12px">283</text><text class="t e" x="68" y="157" style="font-size:12px">236</text><text class="t e" x="68" y="181" style="font-size:12px">188</text><text class="t e" x="68" y="202" style="font-size:12px">141</text><text class="t e" x="68" y="226" style="font-size:12px">94</text><text class="t e" x="68" y="249" style="font-size:12px">47</text><text class="t e" x="68" y="272" style="font-size:12px">0</text>
<text class="t c" x="83" y="287" style="font-size:12px">20:03:10</text><text class="t c" x="153" y="287" style="font-size:12px">20:03:17</text><text class="t c" x="220" y="287" style="font-size:12px">20:03:24</text><text class="t c" x="288" y="287" style="font-size:12px">20:03:31</text><text class="t c" x="355" y="287" style="font-size:12px">20:03:38</text><text class="t c" x="420" y="287" style="font-size:12px">20:03:45</text>
<text class="t" x="140" y="310" style="font-size:12.500px">(tempos médios de resposta em milissegundos)</text>
<rect x="172" y="52" width="192" height="26" fill="#fff" stroke="#444" stroke-width="2"/><path d="M365 54v26h-192" stroke="#aaa" stroke-width="3" fill="none"/><text class="b c" x="265" y="71">Histórico de Tempos</text>
<rect x="443" y="295" width="25" height="25" fill="#a8d0ec" stroke="#6a9ac0" stroke-width="2"/><rect x="449" y="296" width="13" height="8" fill="#fff"/>
</g>
<rect x="627" y="107" width="150" height="15" fill="#f4f8f8"/>
<path d="M634 113.500H773" stroke="#ccc" stroke-width="1.300"/><rect x="654" y="110.500" width="4" height="7" rx="1" fill="#ddd" stroke="#888" stroke-width=".5"/>
<rect x="629" y="123" width="147" height="106.500" fill="#fff" stroke="#8ab" stroke-width=".7"/>
<rect x="635" y="126" width="4.800" height="4.800" fill="#dde" stroke="#99a" stroke-width=".4"/><path d="M636 128.500l1 1.500 2-3" stroke="#247" stroke-width=".6" fill="none"/><text class="t" x="643" y="131">Tempo Real</text>
<rect x="688" y="128" width="37" height="8" fill="#fff" stroke="#444" stroke-width=".7"/><path d="M725.500 129v7.500h-37" stroke="#aaa" fill="none"/><text class="b c" x="706.500" y="134.500" style="font-size:5.500px">Timeouts</text>
<text class="t" x="739" y="134">Amarelo</text><rect x="756" y="127.500" width="16" height="8" fill="#fff" stroke="#777" stroke-width=".5"/><text class="t e" x="771" y="133.500">120</text>
<text class="t" x="736" y="145">Vermelho</text><rect x="756" y="139" width="16" height="8" fill="#fff" stroke="#777" stroke-width=".5"/><text class="t e" x="771" y="145">180</text>
<g class="z" transform="translate(620,140) scale(.33333)">
<ellipse cx="180" cy="150" rx="135" ry="105" fill="#e0ffff" stroke="#456" stroke-width="1.500"/>
<ellipse cx="180" cy="120" rx="135" ry="105" fill="#fff" stroke="#456" stroke-width="1.500"/>
<path d="M180 120L100 205A135 105 0 0 1 258 30Z" fill="#ff0"/>
<path d="M180 120L258 30A135 105 0 0 1 313 117Z" fill="#f00"/>
<path d="M180 120L313 117L312 140Z" fill="#000"/>
<rect x="327" y="35" width="128" height="170" fill="#fff" stroke="#555" stroke-width="2"/>
<rect x="347" y="52" width="20" height="20" fill="#fff" stroke="#333" stroke-width="1.500"/><rect x="347" y="90" width="20" height="20" fill="#ff0" stroke="#333" stroke-width="1.500"/><rect x="347" y="128" width="20" height="20" fill="#f00" stroke="#333" stroke-width="1.500"/><rect x="347" y="167" width="20" height="20" fill="#000"/>
<text class="t" x="375" y="64" style="font-size:12.500px">&lt; 120 ms</text><text class="t" x="375" y="102" style="font-size:12.500px">&lt; 180 ms</text><text class="t" x="375" y="140" style="font-size:12.500px">&gt;= 180 ms</text><text class="t" x="375" y="179" style="font-size:12.500px">Sem Resp.</text>
<rect x="442" y="238" width="25" height="25" fill="#a8d0ec" stroke="#6a9ac0" stroke-width="2"/><rect x="448" y="239" width="13" height="8" fill="#fff"/>
<rect x="28" y="283" width="444" height="117" fill="#d4d4d4" stroke="#aaa" stroke-width="1.500"/>
<text class="t" x="38" y="313">Enviados</text><rect x="106" y="298" width="64" height="19" fill="#fff" stroke="#777"/><text class="t e" x="166" y="313">38</text>
<text class="t" x="183" y="313">Recebidos</text><rect x="256" y="298" width="62" height="19" fill="#fff" stroke="#777"/><text class="t e" x="314" y="313">37</text>
<text class="t" x="38" y="355">Perdidos</text><rect x="103" y="340" width="190" height="19" fill="#fff" stroke="#777"/><text class="t e" x="289" y="355">1 (perda de 2.70%)</text>
<text class="t" x="305" y="355">Média</text><rect x="355" y="340" width="88" height="19" fill="#fff" stroke="#777"/><text class="t e" x="439" y="355">151.76</text>
<text class="t" x="38" y="396">Mínimo</text><rect x="93" y="382" width="62" height="19" fill="#fff" stroke="#777"/><text class="t e" x="151" y="397">113</text>
<text class="t" x="168" y="396">Máximo</text><rect x="226" y="382" width="64" height="19" fill="#fff" stroke="#777"/><text class="t e" x="286" y="397">523</text>
<text class="t" x="302" y="400">Tempo Real</text><rect x="383" y="387" width="16" height="14" fill="#dde" stroke="#889"/>
</g>
<rect x="625" y="274" width="158" height="4" fill="#c8f4f6"/>

<!-- context menu -->
<rect x="379" y="46" width="112" height="176" fill="#fff" stroke="#ccc" stroke-width=".7"/>
<rect x="379.500" y="46.500" width="13" height="175" fill="#f2f2f2"/>
<rect x="379.500" y="129" width="111" height="11" fill="#bcdcfa" stroke="#8ab8e8" stroke-width=".5"/>
<path d="M393 114.500h97M393 127.500h97M393 162.500h97M393 187.500h97" stroke="#ddd" stroke-width="1"/>
<circle cx="385" cy="52" r="4" fill="#fff" stroke="#aab" stroke-width=".8"/>
<circle cx="385" cy="63" r="4" fill="#3a8a90"/><circle cx="385" cy="63" r="2" fill="#8ad8a0"/>
<rect x="381" y="70" width="8" height="8" fill="#a0b4a0"/><rect x="382.500" y="71.500" width="5" height="5" fill="#4a7a8a"/>
<rect x="381" y="81" width="8" height="8" fill="#b09a60"/><rect x="383" y="83" width="4" height="4" fill="#ddd"/>
<rect x="381" y="92" width="4" height="4" fill="#2a6ac0"/><rect x="385" y="92" width="4" height="4" fill="#e08a20"/><rect x="381" y="96" width="4" height="4" fill="#e8b020"/><rect x="385" y="96" width="4" height="4" fill="#2a6ac0"/>
<text x="381" y="109.500" style="font:bold 7px 'Liberation Sans'" fill="#568">W</text>
<path d="M381 125v-7l2 3 2-2 2 3 2-1v4z" fill="#c8883a"/>
<circle cx="383" cy="134" r="2.500" fill="#2a6ac0"/><circle cx="387" cy="136" r="2.500" fill="#3aa060"/>
<path d="M381.500 142l7 7M388.500 142l-7 7" stroke="#ccc" stroke-width="2"/>
<rect x="381" y="155" width="6" height="5" fill="#1a9a3a"/><rect x="385" y="152" width="4" height="4" fill="#2ac05a"/>
<rect x="381" y="166" width="8" height="8" fill="#4a6ab0"/>
<rect x="382" y="176" width="6" height="8" fill="#e8eef8" stroke="#aab" stroke-width=".5"/>
<text x="381" y="198" style="font:bold 9px 'Liberation Serif'" fill="#248">a</text>
<rect x="381" y="201" width="8" height="8" fill="#b4d0ec" stroke="#68a" stroke-width=".5"/><rect x="383" y="201.500" width="4" height="3" fill="#fff"/>
<rect x="381" y="213" width="8" height="6" fill="#999"/><rect x="383" y="211" width="4" height="3" fill="#ccc"/>
<text class="t" x="396" y="53.700">Pingar "92.48.111.152"</text>
<text class="t" x="396" y="64.700">Traceroute "92.48.111.152"</text>
<text class="t" x="396" y="75.700">Reverse DNS de "92.48.111.152"</text>
<text class="t" x="396" y="86.700">Whois ao IP "92.48.111.152"</text>
<text class="t" x="396" y="97.700">Port Scan a "92.48.111.152"</text>
<text class="t" x="396" y="108.700">Queries WMI a "92.48.111.152"</text>
<text class="t" x="396" y="122.700">Abrir "92.48.111.152" no Navegador</text>
<text class="t" x="396" y="135.700">Conectar</text>
<text class="t" x="396" y="146.700" style="fill:#aaa">Utilitários Web</text>
<text class="t" x="396" y="157.700">Comandos Customizados</text>
<text class="t" x="396" y="171.700">Seleccionar Tudo</text>
<text class="t" x="396" y="182.700">Copiar</text>
<text class="t" x="396" y="195.700">Editar Texto Seleccionado</text>
<text class="t" x="396" y="206.700">Guardar</text>
<text class="t" x="396" y="217.700">Imprimir</text>
<path d="M484 132.500l2.500 1.500-2.500 1.500zM484 154.500l2.500 1.500-2.500 1.500z" fill="#333"/><path d="M484 143.500l2.500 1.500-2.500 1.500z" fill="#aaa"/>
<!-- submenu -->
<rect x="491" y="129" width="136.500" height="56" fill="#fff" stroke="#ccc" stroke-width=".7"/>
<rect x="491.500" y="129.500" width="12" height="55" fill="#f2f2f2"/>
<rect x="491.500" y="141" width="136" height="11" fill="#bcdcfa" stroke="#8ab8e8" stroke-width=".5"/>
<circle cx="495" cy="132.500" r="2" fill="#2a5ab0"/><circle cx="499" cy="136.500" r="2.500" fill="#1a3a90"/>
<circle cx="497" cy="145" r="3" fill="#d8b080"/><rect x="493" y="148" width="8" height="3.500" fill="#556"/><path d="M494 144c1-3 5-3 6 0" fill="#432"/>
<rect x="493" y="153" width="9" height="7" fill="#334"/><rect x="495" y="160" width="5" height="1.500" fill="#888"/>
<path d="M494 171l5-6 2 2-5 5z" fill="#d8c060"/><path d="M499 165l3-2" stroke="#6a9" stroke-width="1.200"/>
<path d="M493 182l7-7 2 2-7 7z" fill="#a08a80"/>
<text class="t" x="508" y="136.700">Remote Desktop Connection a "92.48.111.152"</text>
<text class="t" x="508" y="147.700">SSH a "92.48.111.152"</text>
<text class="t" x="508" y="158.700">Telnet a "92.48.111.152"</text>
<text class="t" x="508" y="169.700">Rlogin a "92.48.111.152"</text>
<text class="t" x="508" y="180.700">Raw a "92.48.111.152"</text>
<path d="M573.500 146v8l2-1.800 1.500 2.500 1-.6-1.300-2.400h2.500z" fill="#fff" stroke="#333" stroke-width=".6"/>
</svg>
</body></html>
